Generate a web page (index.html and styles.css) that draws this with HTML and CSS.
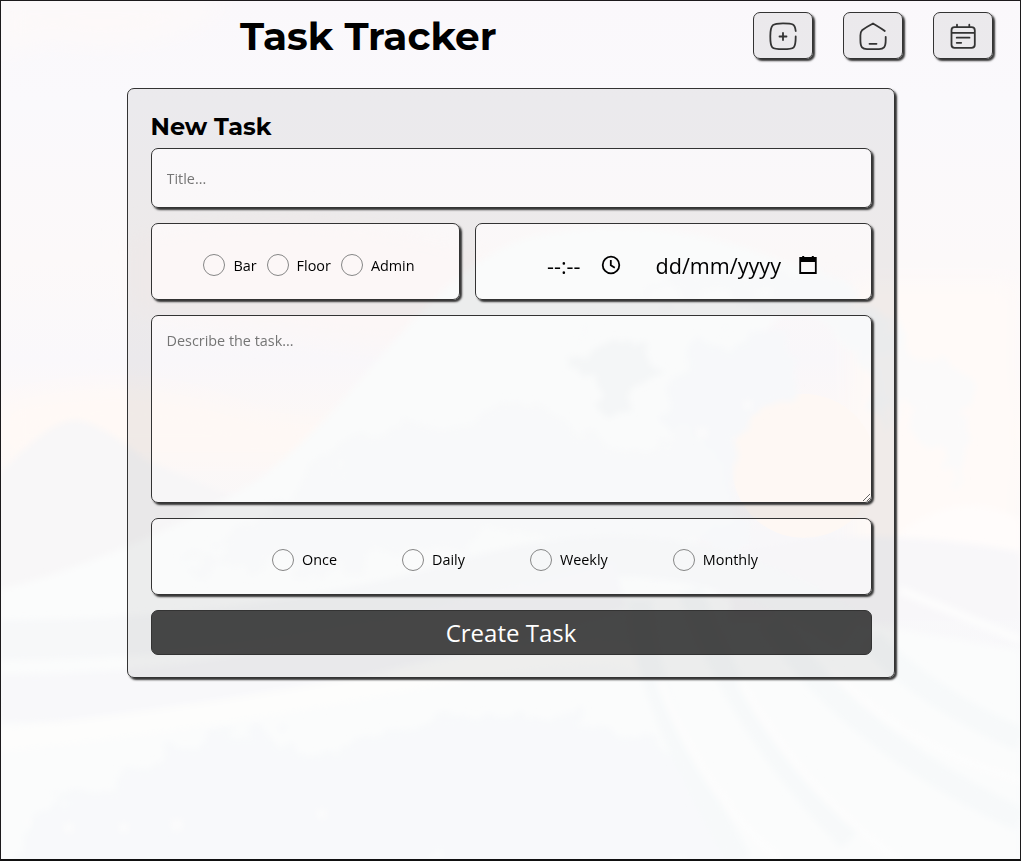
FILE: index.html
```html
<!DOCTYPE html>
<html lang="en">
<head>
<meta charset="utf-8">
<title>Task Tracker</title>
<link rel="stylesheet" href="styles.css">
</head>
<body>
<svg class="scene" viewBox="0 0 1021 861" preserveAspectRatio="none" aria-hidden="true">
  <defs>
    <linearGradient id="sky" x1="0" y1="0" x2="0" y2="1">
      <stop offset="0" stop-color="#faf8fb"/><stop offset=".12" stop-color="#faf9fc"/>
      <stop offset=".3" stop-color="#fcf9f9"/><stop offset=".42" stop-color="#faf8fb"/>
      <stop offset=".5" stop-color="#fef9f7"/><stop offset=".62" stop-color="#f9f8fa"/>
      <stop offset="1" stop-color="#f8f9fb"/>
    </linearGradient>
    <filter id="soft" x="-10%" y="-20%" width="120%" height="140%"><feGaussianBlur stdDeviation="12"/></filter>
    <filter id="fine"><feGaussianBlur stdDeviation="3"/></filter>
    <filter id="foam" x="-10%" y="-10%" width="120%" height="120%">
      <feTurbulence type="fractalNoise" baseFrequency=".03" numOctaves="3" seed="4"/>
      <feDisplacementMap in="SourceGraphic" scale="60" xChannelSelector="R" yChannelSelector="G"/>
      <feGaussianBlur stdDeviation="3"/>
    </filter>
  </defs>
  <rect width="1021" height="861" fill="url(#sky)"/>
  <g filter="url(#soft)">
    <path d="M0 0H230Q180 50 80 45Q30 30 0 65Z" fill="#fdf9f9"/>
    <path d="M127 240Q300 190 500 260L400 350L127 310Z" fill="#fdf8f8"/>
    <path d="M0 405Q120 370 230 408T420 400L300 460H0Z" fill="#fff9f6"/>
    <path d="M850 280H1021V570H850Z" fill="#fffaf8"/>
  </g>
  <path d="M0 475Q55 412 83 421T145 460L240 500V610H0Z" fill="#f8f7f8" filter="url(#fine)"/>
  <path d="M0 590Q130 555 250 485C350 420 430 260 535 236Q680 205 835 285Q745 310 735 430Q660 560 730 600L1021 650V861H0Z" fill="#fbfcfc" filter="url(#fine)"/>
  <circle cx="804" cy="466" r="72" fill="#fff9f5"/>
  <path d="M865 570Q940 475 1021 520V610H865Z" fill="#fffcfb" filter="url(#fine)"/>
  <path d="M735 555Q850 520 1021 552V620H730Z" fill="#f8f7f9" filter="url(#fine)"/>
  <g filter="url(#foam)">
    <path d="M565 350Q610 280 730 300Q845 300 870 390L890 440L905 330L800 270Q660 250 565 350Z" fill="#f9fafb"/>
    <path d="M570 360Q615 320 665 370L610 410Z" fill="#f5f7f8"/>
    <path d="M690 340Q650 430 690 500Q700 560 740 590L735 470Q740 400 800 390L790 330Z" fill="#f8f9fb"/>
    <path d="M260 510L370 430L520 400L610 440L700 440L730 520L650 570L500 530L350 570L180 565Z" fill="#f9fafb"/>
    <path d="M870 350L950 360L980 405L955 480L920 450Z" fill="#fbfafa"/>
    <path d="M165 750L260 728L340 755L440 715L590 720L700 770L740 870H20V810L110 785Z" fill="#f8f9fb"/>
  </g>
  <g fill="none" filter="url(#fine)">
    <path d="M0 640Q260 640 470 578T850 630" stroke="#f7f8f9" stroke-width="40"/>
    <path d="M0 698Q170 700 330 660T620 585" stroke="#f8f8fa" stroke-width="48"/>
    <path d="M0 740Q200 720 430 675T650 680" stroke="#fdfdfc" stroke-width="24"/>
    <path d="M640 600Q640 690 740 861M690 590Q740 730 850 840M770 620Q850 740 1021 820M870 640Q930 700 1021 740" stroke="#f7f9fa" stroke-width="24"/>
    <path d="M660 680Q700 790 780 861M740 680Q800 790 900 861M830 670Q910 750 1021 780M900 590L1021 640" stroke="#fdfdfd" stroke-width="8"/>
  </g>
  <g fill="#fcfcfc" filter="url(#fine)">
    <circle cx="27" cy="822" r="5"/><circle cx="69" cy="828" r="5"/><circle cx="124" cy="828" r="5"/><circle cx="177" cy="825" r="6"/><circle cx="322" cy="814" r="5"/><circle cx="702" cy="433" r="6"/><circle cx="748" cy="405" r="5"/>
  </g>
</svg>
<div class="page">
  <header class="topbar">
    <h1 class="brand">Task Tracker</h1>
    <nav class="nav">
      <button class="nav-button" aria-label="New task"><svg class="icon" viewBox="0 0 30 30"><path d="M27.700 10C27 3 25 2.300 15 2.300S2.300 3 2.300 15.300s1 12.900 12.700 12.900S27.700 27.500 27.700 15.500M15 12v7M11.500 15.500h7"/></svg></button>
      <button class="nav-button" aria-label="Home"><svg class="icon" viewBox="0 0 30 30"><path d="M26.800 10Q25 8.500 15 2.500Q8 6.200 4 9.300Q2.400 10.800 2.400 14.500V19C2.400 26.500 4.500 28.200 9 28.200H21C25.500 28.200 27.700 26.500 27.700 19V15.800M11.500 22.800h7"/></svg></button>
      <button class="nav-button" aria-label="Calendar"><svg class="icon" viewBox="0 0 30 30"><path d="M6.500 6.200h17q3.300 0 3.300 3v14.600q0 3-3.300 3h-17q-3 0-3-3V9.200q0-3 3-3ZM3.500 11.800h23.300M9 3.700v2.500M21.300 3.700v2.500M8.700 16.700h12.800M8.700 21.800h4.500"/></svg></button>
    </nav>
  </header>
  <form class="panel">
    <h2 class="heading">New Task</h2>
    <input class="box title-input" type="text" placeholder="Title...">
    <div class="split">
      <div class="box areas">
        <label class="choice"><input class="radio" type="radio" name="area">Bar</label>
        <label class="choice"><input class="radio" type="radio" name="area">Floor</label>
        <label class="choice"><input class="radio" type="radio" name="area">Admin</label>
      </div>
      <div class="box when">
        <span class="time">--:--</span>
        <svg class="clock" viewBox="0 0 20 20"><circle cx="10" cy="10" r="8.300"/><path d="M9.800 5v5.300l4 2.500"/></svg>
        <span class="date">dd/mm/yyyy</span>
        <svg class="calendar" viewBox="0 0 18 20"><path class="outline" d="M1.200 3h15.600v15H1.200Z"/><path d="M1 3h16v4H1ZM3.200 1h2v3h-2ZM12.800 1h2v3h-2Z"/></svg>
      </div>
    </div>
    <textarea class="box description" placeholder="Describe the task..."></textarea>
    <div class="box repeats">
      <label class="choice"><input class="radio" type="radio" name="repeat">Once</label>
      <label class="choice"><input class="radio" type="radio" name="repeat">Daily</label>
      <label class="choice"><input class="radio" type="radio" name="repeat">Weekly</label>
      <label class="choice"><input class="radio" type="radio" name="repeat">Monthly</label>
    </div>
    <button class="submit" type="button">Create Task</button>
  </form>
</div>
</body>
</html>
```
FILE: styles.css
```css
* { box-sizing: border-box; }
body { margin: 0; font-family: "Open Sans", sans-serif; font-size: 14.400px; color: #000; overflow: hidden; }
.scene { position: absolute; inset: 0; width: 100%; height: 100%; z-index: -1; }
.page { height: 861px; border: 1px solid #1c1a1c; border-bottom: 2px solid #111; }
.topbar { display: flex; justify-content: space-between; align-items: flex-start; padding: 11px 27px 0 239px; height: 87px; }
.brand, .heading { font-family: Montserrat, Inter, sans-serif; font-weight: 700; margin: 0; white-space: nowrap; }
.brand { font-size: 39px; line-height: 48px; }
.nav { display: flex; gap: 30px; }
.nav-button { width: 60px; height: 47px; padding: 0; display: grid; place-items: center; background: rgba(0, 0, 0, .06); border: 1px solid #333; border-radius: 7px; box-shadow: 2px 2px 2px #333; }
.icon { width: 30px; height: 30px; fill: none; stroke: #333; stroke-width: 1.800; stroke-linecap: round; stroke-linejoin: round; }
.panel { width: 768px; height: 590px; margin: 0 0 0 126px; padding: 23px 22px 23px 23px; border: 1px solid #333; border-radius: 7px; background: rgba(0, 0, 0, .06); box-shadow: 2px 2px 2px #333; display: flex; flex-direction: column; gap: 15px; }
.heading { font-size: 24px; line-height: 29px; margin: 0 0 -8px -.5px; }
.box { border: 1px solid #333; border-radius: 7px; background: rgba(255, 255, 255, .1); backdrop-filter: brightness(1.058); box-shadow: 2px 2px 2px #333; }
.title-input, .description { display: block; width: 100%; font: 14.400px "Open Sans", sans-serif; padding: 15px 15px 15px 14.500px; outline: none; }
.title-input { height: 60px; flex: none; }
.title-input::placeholder, .description::placeholder { color: #757575; }
.split { display: flex; gap: 15px; height: 77px; flex: none; }
.areas { width: 309px; display: flex; align-items: center; justify-content: center; gap: 10px; padding: 7px 0 0 7px; }
.choice { display: flex; align-items: center; gap: 8px; }
.radio { appearance: none; width: 22px; height: 22px; margin: 0; border: 1px solid #858585; border-radius: 50%; }
.when { flex: 1; display: flex; align-items: center; padding: 7px 0 0 71px; font-size: 21.600px; }
.clock { width: 20px; height: 20px; margin: 0 34px 0 21px; fill: none; stroke: #000; stroke-width: 1.800; }
.calendar { width: 18px; height: 20px; margin-left: 18px; }
.outline { fill: none; stroke: #000; stroke-width: 1.800; }
.description { height: 188px; flex: none; resize: both; }
.repeats { height: 77px; flex: none; display: flex; align-items: center; gap: 65px; padding: 6px 0 0 120px; }
.submit { height: 45px; flex: none; padding: 0 1px 0 0; color: #fff; font: 24px "Open Sans", sans-serif; background: rgba(0, 0, 0, .7); border: 1px solid #333; border-radius: 7px; }
```
